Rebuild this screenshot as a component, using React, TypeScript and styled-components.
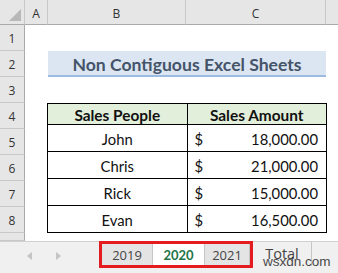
import React from "react";
import styled, { createGlobalStyle } from "styled-components";

const GlobalStyle = createGlobalStyle`
  html, body {
    margin: 0;
    padding: 0;
    background: #ffffff;
  }
  body {
    width: 338px;
    height: 273px;
    overflow: hidden;
  }
`;

const rows = [
  { name: "John", amount: "18,000.00" },
  { name: "Chris", amount: "21,000.00" },
  { name: "Rick", amount: "15,000.00" },
  { name: "Evan", amount: "16,500.00" },
];

export default function App() {
  return (
    <>
      <GlobalStyle />
      <Window>
        <Sheet>
          <Corner>
            <CornerTriangle />
          </Corner>
          <ColHeader>A</ColHeader>
          <ColHeader>B</ColHeader>
          <ColHeader>C</ColHeader>
          <ColHeader $last />
          {[1, 2, 3, 4, 5, 6, 7, 8].map((n) => (
            <RowHeader key={n} style={{ gridRow: n + 1 }}>
              {n}
            </RowHeader>
          ))}
          <RowHeader style={{ gridRow: 10 }} />
          <Title>Non Contiguous Excel Sheets</Title>
          <TableSlot>
            <SalesTable>
              <thead>
                <tr>
                  <HeadCell>Sales People</HeadCell>
                  <HeadCell>Sales Amount</HeadCell>
                </tr>
              </thead>
              <tbody>
                {rows.map((r) => (
                  <tr key={r.name}>
                    <NameCell>{r.name}</NameCell>
                    <AmountCell>
                      <span>$</span>
                      <span>{r.amount}</span>
                    </AmountCell>
                  </tr>
                ))}
              </tbody>
            </SalesTable>
          </TableSlot>
        </Sheet>
        <TabBar>
          <Arrows>
            <Arrow $dir="left" />
            <Arrow $dir="right" />
          </Arrows>
          <Highlight>
            <Tab>2019</Tab>
            <Tab $active>2020</Tab>
            <Tab $narrow>2021</Tab>
          </Highlight>
          <Tab $total>Total</Tab>
          <Watermark>wsxdn.com</Watermark>
        </TabBar>
      </Window>
    </>
  );
}

const Window = styled.div`
  width: 338px;
  height: 273px;
  display: flex;
  flex-direction: column;
  position: relative;
  overflow: hidden;
  font-family: "Open Sans", "Liberation Sans", sans-serif;
`;

const Sheet = styled.div`
  display: grid;
  grid-template-columns: 25px 23px 138px 140px 1fr;
  grid-template-rows: 25px repeat(8, 26px) 8px;
  background: #ffffff;
`;

const Corner = styled.div`
  grid-row: 1;
  grid-column: 1;
  background: #e6e6e6;
  border-right: 1px solid #c8c8c8;
  border-bottom: 1px solid #a9a9a9;
  position: relative;
`;

const CornerTriangle = styled.div`
  position: absolute;
  right: 3px;
  bottom: 3px;
  width: 0;
  height: 0;
  border-left: 12px solid transparent;
  border-bottom: 12px solid #b8b8b8;
`;

const ColHeader = styled.div<{ $last?: boolean }>`
  grid-row: 1;
  background: #e6e6e6;
  border-right: ${(p) => (p.$last ? "none" : "1px solid #c8c8c8")};
  border-bottom: 1px solid #a9a9a9;
  display: flex;
  align-items: center;
  justify-content: center;
  font-size: 12px;
  color: #333333;
  padding-top: 2px;
`;

const RowHeader = styled.div`
  grid-column: 1;
  background: #e6e6e6;
  border-right: 1px solid #a9a9a9;
  border-bottom: 1px solid #c8c8c8;
  display: flex;
  align-items: center;
  justify-content: center;
  font-size: 12px;
  color: #333333;
  padding-top: 2px;
`;

const Title = styled.div`
  grid-row: 3;
  grid-column: 3 / 5;
  background: #dce6f2;
  border-bottom: 2px solid #9bbbe0;
  display: flex;
  align-items: center;
  justify-content: center;
  font-family: "Lato", "Open Sans", sans-serif;
  font-weight: 700;
  font-size: 17.6px;
  color: #44546a;
  padding-top: 2px;
`;

const TableSlot = styled.div`
  grid-row: 5 / 10;
  grid-column: 3 / 5;
  margin-left: -1px;
  margin-right: -1px;
`;

const SalesTable = styled.table`
  width: 100%;
  height: 100%;
  border-collapse: collapse;
  table-layout: fixed;
  font-family: "Lato", "Open Sans", sans-serif;
  font-size: 14.8px;
  color: #111111;
  td, th {
    border: 1px solid #000000;
    padding: 0;
  }
`;

const HeadCell = styled.th`
  background: #e2efda;
  font-weight: 700;
  font-size: 15.4px;
  text-align: center;
  padding-top: 2px !important;
`;

const NameCell = styled.td`
  text-align: center;
  padding-top: 2px !important;
`;

const AmountCell = styled.td`
  padding: 2px 8px 0 7px !important;
  span:first-child {
    float: left;
  }
  span:last-child {
    float: right;
  }
`;

const TabBar = styled.div`
  flex: 1;
  display: flex;
  align-items: flex-start;
  background: #f0f0f0;
  border-top: 1px solid #d0d0d0;
  position: relative;
`;

const Arrows = styled.div`
  width: 99px;
  height: 27px;
  display: flex;
  align-items: center;
  gap: 24px;
  padding-left: 27px;
  box-sizing: border-box;
`;

const Arrow = styled.div<{ $dir: "left" | "right" }>`
  width: 0;
  height: 0;
  border-top: 4px solid transparent;
  border-bottom: 4px solid transparent;
  ${(p) =>
    p.$dir === "left"
      ? "border-right: 5px solid #c4c4c4;"
      : "border-left: 5px solid #c4c4c4;"}
`;

const Highlight = styled.div`
  display: flex;
  height: 27px;
  box-sizing: border-box;
  border: 3px solid #e41b1f;
  margin-top: -1px;
`;

const Tab = styled.div<{ $active?: boolean; $narrow?: boolean; $total?: boolean }>`
  width: ${(p) => (p.$total ? "59px" : p.$narrow ? "45px" : p.$active ? "52px" : "51px")};
  height: ${(p) => (p.$total ? "24px" : "auto")};
  display: flex;
  align-items: center;
  justify-content: center;
  box-sizing: border-box;
  background: ${(p) => (p.$active ? "#ffffff" : p.$total ? "transparent" : "#e4e4e4")};
  border-right: 1px solid #c6c6c6;
  font-size: ${(p) => (p.$total ? "14.5px" : "13px")};
  font-weight: ${(p) => (p.$active ? 700 : 400)};
  color: ${(p) => (p.$active ? "#217346" : "#444444")};
  font-family: ${(p) => (p.$active ? '"Lato", "Open Sans", sans-serif' : '"Open Sans", sans-serif')};
  padding-top: 1px;
  ${(p) => (p.$total ? "padding-bottom: 3px;" : "")}
`;

const Watermark = styled.div`
  position: absolute;
  left: 263px;
  top: 12px;
  font-family: "Liberation Sans", sans-serif;
  font-size: 13.5px;
  color: #2a2a2a;
  opacity: 0.85;
`;
